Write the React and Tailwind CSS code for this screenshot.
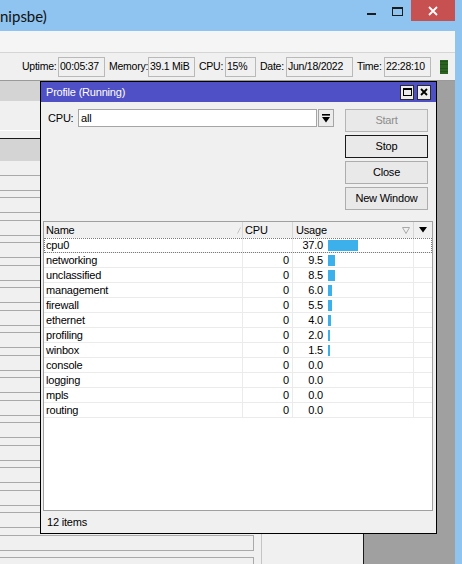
import React from "react";

const rows = [
  ["cpu0", "", "37.0", 30],
  ["networking", "0", "9.5", 7],
  ["unclassified", "0", "8.5", 7],
  ["management", "0", "6.0", 4],
  ["firewall", "0", "5.5", 4],
  ["ethernet", "0", "4.0", 3],
  ["profiling", "0", "2.0", 2],
  ["winbox", "0", "1.5", 2],
  ["console", "0", "0.0", 0],
  ["logging", "0", "0.0", 0],
  ["mpls", "0", "0.0", 0],
  ["routing", "0", "0.0", 0],
];

function StatusItem({ label, value, labelClass, boxClass, first }) {
  return (
    <div className={first ? "flex items-center shrink-0" : "flex items-center shrink-0 ml-[4px]"}>
      <span className={labelClass}>{label}</span>
      <div className={boxClass}>{value}</div>
    </div>
  );
}

function Button({ children, variant }) {
  const base =
    "h-[23px] flex items-center justify-center bg-[#e9e9e9] border";
  if (variant === "disabled")
    return <div className={base + " border-[#b5b5b5] text-[#8c8c8c]"}>{children}</div>;
  if (variant === "default")
    return <div className={base + " border-[#1a1a1a]"}>{children}</div>;
  return <div className={base + " border-[#adadad]"}>{children}</div>;
}

export default function App() {
  const fields = Array.from({ length: 18 });
  return (
    <div className="w-[462px] h-[564px] overflow-hidden bg-[#8ec4ef] flex font-['Liberation_Sans',Arial,sans-serif] text-[11px] tracking-[-0.2px] text-black leading-none">
      <div className="w-[455px] flex flex-col">
        {/* Outer window title bar */}
        <div className="h-[31px] flex items-start shrink-0">
          <div className="h-[31px] flex items-center pt-[2px] font-['Lato',sans-serif] text-[15px] tracking-normal text-[#111]">
            nipsbe)
          </div>
          <div className="flex-1" />
          <div className="w-[26px] h-[21px] flex justify-center pt-[13px]">
            <div className="w-[9px] h-[2px] bg-[#1c1c1c]" />
          </div>
          <div className="w-[27px] h-[21px] flex justify-center pt-[7px]">
            <div className="w-[11px] h-[9px] border border-[#1c1c1c] border-t-2" />
          </div>
          <div className="w-[44px] h-[21px] bg-[#c75050] flex items-center justify-center">
            <svg width="10" height="10" viewBox="0 0 10 10">
              <path d="M1 1 L9 9 M9 1 L1 9" stroke="#ffffff" strokeWidth="1.8" />
            </svg>
          </div>
        </div>

        {/* Client area */}
        <div className="flex-1 flex flex-col bg-[#f0f0f0]">
          <div className="h-[22px] shrink-0 bg-[#f5f5f5] border-b border-[#d5d5d5]" />
          <div className="h-[28px] shrink-0 flex items-center justify-end pr-[7px] border-b border-[#9a9a9a] text-[10.5px] tracking-[-0.25px]">
            <StatusItem first label="Uptime:" value="00:05:37" labelClass="w-[36px] min-w-0 whitespace-nowrap" boxClass="w-[47px] h-[20px] border border-[#b9b9b9] flex items-center pl-[1px]" />
            <StatusItem label="Memory:" value="39.1 MiB" labelClass="w-[39px] min-w-0 whitespace-nowrap" boxClass="w-[47px] h-[20px] border border-[#b9b9b9] flex items-center pl-[1px]" />
            <StatusItem label="CPU:" value="15%" labelClass="w-[26px] min-w-0 whitespace-nowrap" boxClass="w-[31px] h-[20px] border border-[#b9b9b9] flex items-center pl-[1px]" />
            <StatusItem label="Date:" value="Jun/18/2022" labelClass="w-[26px] min-w-0 whitespace-nowrap" boxClass="w-[67px] h-[20px] border border-[#b9b9b9] flex items-center pl-[1px]" />
            <StatusItem label="Time:" value="22:28:10" labelClass="w-[27px] min-w-0 whitespace-nowrap" boxClass="w-[47px] h-[20px] border border-[#b9b9b9] flex items-center pl-[1px]" />
            <div className="ml-[9px] w-[8px] h-[14px] shrink-0 bg-[#2a6420] flex flex-col justify-between py-[1px]">
              <div className="h-[1px] bg-[#22531a]" />
              <div className="h-[1px] bg-[#22531a]" />
              <div className="h-[1px] bg-[#22531a]" />
              <div className="h-[1px] bg-[#22531a]" />
            </div>
          </div>

          {/* MDI area */}
          <div className="flex-1 flex relative">
            {/* Background window (behind) */}
            <div className="w-[364px] flex flex-col">
              <div className="h-[20px] bg-[#d4d4d4] shrink-0" />
              <div className="h-[30px] border-b border-white shrink-0" />
              <div className="h-[7px] shrink-0" />
              <div className="flex-1 flex flex-col border-t border-r border-[#1a1a1a]">
                <div className="h-[22px] bg-[#d4d4d4] shrink-0" />
                <div className="flex-1 flex pt-[13.5px] overflow-hidden">
                  <div className="w-[254px] flex flex-col gap-[6.5px]">
                    {fields.map((_, i) => (
                      <div key={i} className="h-[16px] shrink-0 border-t border-b border-r border-[#a9a9a9]" />
                    ))}
                  </div>
                  <div className="w-[7px]" />
                  <div className="flex-1 border-l border-[#c4c4c4]" />
                </div>
              </div>
            </div>
            <div className="flex-1 bg-[#a0a0a0]" />

            {/* Profile window */}
            <div className="absolute left-[40px] top-0 w-[397px] h-[453px] border border-black flex flex-col bg-[#f0f0f0]">
              <div className="h-[20px] shrink-0 bg-[#5050c6] flex items-center pl-[5px] pr-[5px] text-white">
                <span>Profile (Running)</span>
                <div className="flex-1" />
                <div className="flex gap-[3px]">
                  <div className="w-[14px] h-[15px] bg-[#ececec] border border-[#2a2a2a] flex items-center justify-center">
                    <div className="w-[9px] h-[8px] border border-black border-t-2" />
                  </div>
                  <div className="w-[14px] h-[15px] bg-[#ececec] border border-[#2a2a2a] flex items-center justify-center">
                    <svg width="8" height="8" viewBox="0 0 8 8">
                      <path d="M1 1 L7 7 M7 1 L1 7" stroke="#000" strokeWidth="1.8" />
                    </svg>
                  </div>
                </div>
              </div>

              <div className="flex-1 flex flex-col">
                {/* Top controls */}
                <div className="flex items-start pt-[7px] shrink-0">
                  <div className="w-[37px] h-[18px] pl-[7px] flex items-center">CPU:</div>
                  <div className="w-[239px] h-[18px] bg-white border border-[#a5a5a5] flex items-center pl-[2px]">all</div>
                  <div className="ml-[1px] w-[16px] h-[18px] bg-[#ececec] border border-[#a5a5a5] flex items-center justify-center">
                    <svg width="8" height="9" viewBox="0 0 8 9">
                      <rect x="0" y="0" width="8" height="1.6" fill="#000" />
                      <polygon points="0,3 8,3 4,8.5" fill="#000" />
                    </svg>
                  </div>
                  <div className="ml-auto mr-[8px] w-[83px] flex flex-col gap-[3px]">
                    <Button variant="disabled">Start</Button>
                    <Button variant="default">Stop</Button>
                    <Button>Close</Button>
                    <Button>New Window</Button>
                  </div>
                </div>

                {/* Table */}
                <div className="mt-[11px] ml-[2px] mr-[3px] h-[290px] shrink-0 border border-[#a0a0a0] bg-white flex flex-col">
                  <div className="h-[16px] shrink-0 flex bg-[#f0f0f0]">
                    <div className="w-[199px] border-r border-[#d6d6d6] flex items-center justify-between pl-[2px] pr-[1px]">
                      <span>Name</span>
                      <svg width="4" height="7" viewBox="0 0 4 7">
                        <path d="M0.5 6.5 L3.5 0.5" stroke="#c4c4c4" strokeWidth="1" />
                      </svg>
                    </div>
                    <div className="w-[50px] border-r border-[#d6d6d6] flex items-center pl-[2px]">CPU</div>
                    <div className="w-[121px] border-r border-[#d6d6d6] flex items-center justify-between pl-[3px] pr-[3px]">
                      <span>Usage</span>
                      <svg width="8" height="7" viewBox="0 0 8 7">
                        <polygon points="0.5,0.5 7.5,0.5 4,6.5" fill="none" stroke="#a8a8a8" strokeWidth="1" />
                      </svg>
                    </div>
                    <div className="flex-1 flex items-center justify-center">
                      <svg width="8" height="6" viewBox="0 0 8 6">
                        <polygon points="0,0 8,0 4,5.5" fill="#000" />
                      </svg>
                    </div>
                  </div>
                  {rows.map(([name, cpu, usage, bar], i) => (
                    <div
                      key={name}
                      className={
                        i === 0
                          ? "h-[15px] shrink-0 flex border-b border-[#ebebeb] outline outline-1 outline-dotted outline-[#7a7a7a] -outline-offset-1"
                          : "h-[15px] shrink-0 flex border-b border-[#ebebeb]"
                      }
                    >
                      <div className="w-[199px] border-r border-[#ebebeb] flex items-center pl-[2px]">{name}</div>
                      <div className="w-[50px] border-r border-[#ebebeb] flex items-center justify-end pr-[3px]">{cpu}</div>
                      <div className="w-[121px] border-r border-[#ebebeb] flex items-center">
                        <div className="w-[30px] text-right">{usage}</div>
                        {bar > 0 && (
                          <div className="ml-[5px] h-[11px] bg-[#3bb0ea]" style={{ width: bar + "px" }} />
                        )}
                      </div>
                      <div className="flex-1" />
                    </div>
                  ))}
                </div>

                <div className="h-[22px] shrink-0 flex items-center pl-[6px]">12 items</div>
              </div>
            </div>
          </div>
        </div>
      </div>
    </div>
  );
}
